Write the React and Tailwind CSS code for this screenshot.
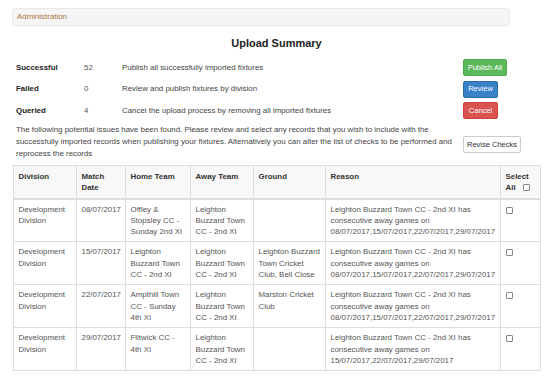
import React from "react";

const summary = [
  { label: "Successful", count: 52, text: "Publish all successfully imported fixtures", btn: "Publish All", cls: "bg-[#5cb85c] border-[#4cae4c] w-[44px]" },
  { label: "Failed", count: 0, text: "Review and publish fixtures by division", btn: "Review", cls: "bg-[#3a82c8] border-[#2e6da4] w-[35px]" },
  { label: "Queried", count: 4, text: "Cancel the upload process by removing all imported fixtures", btn: "Cancel", cls: "bg-[#d9534f] border-[#d43f3a] w-[35px]" },
];

const reason = "Leighton Buzzard Town CC - 2nd XI has consecutive away games on";

const rows = [
  { division: "Development Division", date: "08/07/2017", home: "Offley & Stopsley CC - Sunday 2nd XI", away: "Leighton Buzzard Town CC - 2nd XI", ground: "", dates: "08/07/2017,15/07/2017,22/07/2017,29/07/2017" },
  { division: "Development Division", date: "15/07/2017", home: "Leighton Buzzard Town CC - 2nd XI", away: "Leighton Buzzard Town CC - 2nd XI", ground: "Leighton Buzzard Town Cricket Club, Bell Close", dates: "08/07/2017,15/07/2017,22/07/2017,29/07/2017" },
  { division: "Development Division", date: "22/07/2017", home: "Ampthill Town CC - Sunday 4th XI", away: "Leighton Buzzard Town CC - 2nd XI", ground: "Marston Cricket Club", dates: "08/07/2017,15/07/2017,22/07/2017,29/07/2017" },
  { division: "Development Division", date: "29/07/2017", home: "Flitwick CC - 4th XI", away: "Leighton Buzzard Town CC - 2nd XI", ground: "", dates: "15/07/2017,22/07/2017,29/07/2017" },
];

function Box() {
  return (
    <input
      type="checkbox"
      className="appearance-none block w-[7px] h-[7px] border border-[#8a8a8a] rounded-[1px] bg-white"
    />
  );
}

export default function App() {
  return (
    <div
      className="w-[553px] h-[388px] bg-white px-[12px] pt-[8px] text-[7.9px] text-[#333]"
      style={{ fontFamily: '"Liberation Sans", Arial, sans-serif' }}
    >
      {/* Breadcrumb */}
      <div className="w-[498px] h-[18px] flex items-center px-[4px] bg-[#f5f5f5] border border-[#e8e8e8] rounded-[3px] text-[#ad7440]">
        Administration
      </div>

      <h2 className="text-center font-bold text-[11px] text-[#222] mt-[11px] leading-[12px]">
        Upload Summary
      </h2>

      {/* Summary rows */}
      <div className="mt-[10px] pl-[4px]">
        {summary.map((s) => (
          <div key={s.label} className="flex items-center h-[17px] mb-[4.5px]">
            <div className="w-[68px] font-bold text-[#222]">{s.label}</div>
            <div className="w-[38px] text-[#555]">{s.count}</div>
            <div className="w-[341px] text-[#444]">{s.text}</div>
            <button
              className={`h-[17px] rounded-[2px] border text-white text-[7.5px] flex items-center justify-center ${s.cls}`}
            >
              {s.btn}
            </button>
          </div>
        ))}
      </div>

      {/* Notice */}
      <div className="flex items-center pl-[4px]">
        <p className="w-[447px] leading-[12px] text-[#444]">
          The following potential issues have been found. Please review and select any records that you wish to include with the
          successfully imported records when publishing your fixtures. Alternatively you can alter the list of checks to be performed and
          reprocess the records
        </p>
        <button className="mt-[6px] h-[17px] w-[58px] rounded-[2px] border border-[#ccc] bg-white text-[#333] text-[7.5px] flex items-center justify-center">
          Revise Checks
        </button>
      </div>

      {/* Table */}
      <table className="mt-[5.5px] ml-[1px] w-[527px] table-fixed border-collapse border border-[#ddd] leading-[11.3px]">
        <colgroup>
          <col className="w-[63px]" />
          <col className="w-[49px]" />
          <col className="w-[65px]" />
          <col className="w-[63px]" />
          <col className="w-[72px]" />
          <col className="w-[175px]" />
          <col className="w-[40px]" />
        </colgroup>
        <thead>
          <tr className="bg-[#f8f8f8]">
            {["Division", "Match Date", "Home Team", "Away Team", "Ground", "Reason"].map((h) => (
              <th
                key={h}
                className="text-left align-top font-bold text-[#333] px-[4.5px] pt-[5px] pb-[4px] border border-[#ddd] border-b-2"
              >
                {h}
              </th>
            ))}
            <th className="text-left align-top font-bold text-[#333] px-[4.5px] pt-[5px] pb-[4px] border border-[#ddd] border-b-2">
              Select
              <div className="flex items-center gap-[7px]">
                All <Box />
              </div>
            </th>
          </tr>
        </thead>
        <tbody className="text-[#555]">
          {rows.map((r) => (
            <tr key={r.date}>
              <td className="align-top px-[4.5px] py-[4px] border border-[#ddd]">{r.division}</td>
              <td className="align-top px-[4.5px] py-[4px] border border-[#ddd]">{r.date}</td>
              <td className="align-top px-[4.5px] py-[4px] border border-[#ddd]">{r.home}</td>
              <td className="align-top px-[4.5px] py-[4px] border border-[#ddd]">{r.away}</td>
              <td className="align-top px-[4.5px] py-[4px] border border-[#ddd]">{r.ground}</td>
              <td className="align-top px-[4.5px] py-[4px] border border-[#ddd]">
                {reason}
                <br />
                <span className="whitespace-nowrap">{r.dates}</span>
              </td>
              <td className="align-top px-[4.5px] pt-[7px] border border-[#ddd]">
                <Box />
              </td>
            </tr>
          ))}
        </tbody>
      </table>
    </div>
  );
}
